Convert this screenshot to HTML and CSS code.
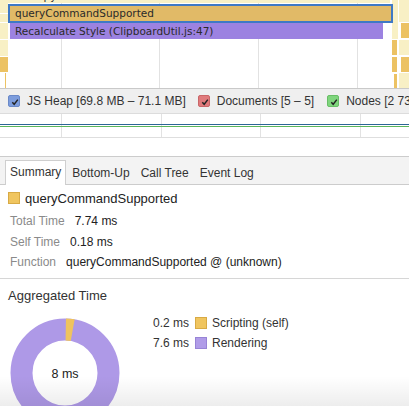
FILE: index.html
```html
<!DOCTYPE html>
<html>
<head>
<meta charset="utf-8">
<link rel="stylesheet" href="styles.css">
</head>
<body>
<div class="page">
  <div class="flame">
    <div class="grid" style="left:61px"></div>
    <div class="grid" style="left:159px"></div>
    <div class="grid" style="left:258px"></div>
    <div class="grid" style="left:357px"></div>

    <div class="blk pale" style="left:0;top:0;width:8px;height:13px"></div>
    <div class="blk pale" style="left:0;top:14px;width:8px;height:8px"></div>
    <div class="blk pale" style="left:0;top:23px;width:8px;height:16px"></div>
    <div class="blk pale" style="left:0;top:40px;width:8px;height:16px"></div>
    <div class="blk gold" style="left:0;top:57px;width:8px;height:15px"></div>
    <div class="blk gold" style="left:5px;top:73px;width:1px;height:15px"></div>

    <div class="bar pale top" style="left:8px;top:-11px;width:382px">tarCopyFont</div>

    <div class="blk pale" style="left:392px;top:0;width:6px;height:39px"></div>
    <div class="blk gold" style="left:392px;top:40px;width:5px;height:15px"></div>
    <div class="blk gold" style="left:392px;top:57px;width:5px;height:15px"></div>
    <div class="blk gold" style="left:394px;top:74px;width:3px;height:14px"></div>
    <div class="blk pale" style="left:399px;top:0;width:10px;height:22px"></div>
    <div class="blk gold" style="left:401px;top:23px;width:8px;height:15px"></div>
    <div class="blk pale" style="left:399px;top:40px;width:10px;height:15px"></div>
    <div class="blk gold" style="left:401px;top:57px;width:8px;height:15px"></div>
    <div class="blk pale" style="left:399px;top:73px;width:10px;height:15px"></div>

    <div class="bar sel" style="left:8px;top:4px;width:385px">queryCommandSupported</div>
    <div class="bar purple" style="left:10px;top:23px;width:373px">Recalculate Style (ClipboardUtil.js:47)</div>
  </div>

  <div class="counters">
    <span class="cb blue"><svg viewBox="0 0 12 12"><path d="M3.3 6.2 L5.2 8.3 L8.8 3.6" /></svg></span>
    <span class="clabel">JS Heap [69.8 MB – 71.1 MB]</span>
    <span class="cb red"><svg viewBox="0 0 12 12"><path d="M3.3 6.2 L5.2 8.3 L8.8 3.6" /></svg></span>
    <span class="clabel">Documents [5 – 5]</span>
    <span class="cb green"><svg viewBox="0 0 12 12"><path d="M3.3 6.2 L5.2 8.3 L8.8 3.6" /></svg></span>
    <span class="clabel">Nodes [2 73</span>
  </div>

  <div class="graph">
    <div class="grid" style="left:61px"></div>
    <div class="grid" style="left:161px"></div>
    <div class="grid" style="left:260px"></div>
    <div class="grid" style="left:360px"></div>
    <div class="line-blue"></div>
    <div class="line-green"></div>
  </div>

  <div class="blank"></div>

  <div class="tabs">
    <div class="tab active">Summary</div>
    <div class="tab">Bottom-Up</div>
    <div class="tab">Call Tree</div>
    <div class="tab">Event Log</div>
  </div>

  <div class="summary">
    <div class="title"><span class="swatch yellow"></span>queryCommandSupported</div>
    <div class="row"><span class="lbl">Total Time</span><span class="val">7.74 ms</span></div>
    <div class="row"><span class="lbl">Self Time</span><span class="val">0.18 ms</span></div>
    <div class="row"><span class="lbl">Function</span><span class="val">queryCommandSupported @ (unknown)</span></div>
  </div>

  <div class="agg">
    <div class="agg-title">Aggregated Time</div>
    <div class="agg-body">
      <svg class="donut" width="120" height="120" viewBox="0 0 120 120">
        <circle cx="57" cy="60" r="43.5" fill="none" stroke="#ae99e7" stroke-width="22"/>
        <circle cx="57" cy="60" r="43.5" fill="none" stroke="#efc35f" stroke-width="22"
          stroke-dasharray="7 300" transform="rotate(-89 57 60)"/>
        <text x="57" y="64.5" text-anchor="middle" class="donut-text">8 ms</text>
      </svg>
      <div class="legend">
        <div class="lrow"><span class="lval">0.2 ms</span><span class="swatch yellow"></span>Scripting (self)</div>
        <div class="lrow"><span class="lval">7.6 ms</span><span class="swatch purple-sw"></span>Rendering</div>
      </div>
    </div>
  </div>
  <div class="shade"></div>
</div>
</body>
</html>
```

FILE: styles.css
```css
html, body {
  margin: 0;
  padding: 0;
  background: #fff;
}
.page {
  position: relative;
  width: 409px;
  height: 406px;
  overflow: hidden;
  font-family: "Liberation Sans", Arial, sans-serif;
  color: #222;
}
.flame {
  position: relative;
  height: 88px;
  border-bottom: 1px solid #c9c9c9;
  overflow: hidden;
  background: #fff;
}
.grid {
  position: absolute;
  top: 0;
  bottom: 0;
  width: 1px;
  background: #e2e2e2;
}
.blk {
  position: absolute;
}
.pale { background: #f8f0c5; }
.gold { background: #ecc263; }
.bar {
  position: absolute;
  height: 16px;
  line-height: 16px;
  box-sizing: border-box;
  padding-left: 6px;
  font-family: "DejaVu Sans", Verdana, sans-serif;
  font-size: 10.5px;
  color: #2a2a2a;
  white-space: nowrap;
  overflow: hidden;
}
.bar.top {
  height: 14px;
  line-height: 14px;
  padding-left: 7px;
}
.bar.sel {
  height: 19px;
  line-height: 15px;
  background: #e1ba67;
  border: 2px solid #3f79c5;
  padding-left: 5px;
}
.bar.purple {
  height: 16px;
  background: #9c82e1;
  padding-left: 5px;
}
.counters {
  height: 24px;
  background: #efefef;
  border-bottom: 1px solid #dcdcdc;
  display: flex;
  align-items: center;
  padding-left: 8px;
  font-size: 12px;
  color: #333;
  white-space: nowrap;
  overflow: hidden;
}
.cb {
  width: 12px;
  height: 12px;
  border-radius: 2px;
  box-sizing: border-box;
  display: inline-block;
  flex: none;
  margin-right: 7px;
}
.cb svg {
  width: 12px;
  height: 12px;
  display: block;
}
.cb path {
  fill: none;
  stroke: #222;
  stroke-width: 1.4;
}
.cb.blue { background: #7d9ddd; border: 1px solid #6a89c8; }
.cb.red { background: #e07a7c; border: 1px solid #c96668; margin-left: 12px; }
.cb.green { background: #7fd57d; border: 1px solid #68be66; margin-left: 13px; }
.clabel { flex: none; }
.graph {
  position: relative;
  height: 23px;
  border-bottom: 1px solid #dedede;
}
.line-blue {
  position: absolute;
  left: 0;
  right: 0;
  top: 10px;
  height: 1px;
  background: #2d6696;
}
.line-green {
  position: absolute;
  left: 0;
  right: 0;
  top: 12px;
  height: 1px;
  background: #5bb65b;
}
.blank {
  height: 18px;
  border-bottom: 1px solid #cccccc;
}
.tabs {
  background: #f3f3f3;
  border-bottom: 1px solid #cccccc;
  display: flex;
  align-items: flex-end;
  padding-left: 5px;
  box-sizing: border-box;
  height: 28px;
  font-size: 12px;
  color: #333;
}
.tab {
  height: 24px;
  line-height: 23px;
  padding: 0 4px;
  margin-right: 1px;
  box-sizing: border-box;
  border: 1px solid transparent;
  border-bottom: none;
  margin-bottom: -1px;
}
.tab.active {
  background: #fff;
  border-color: #cfcfcf;
  height: 25px;
}
.summary {
  padding: 5px 8px 5px;
  border-bottom: 1px solid #d6d6d6;
}
.title {
  display: flex;
  align-items: center;
  height: 16px;
  font-size: 13px;
  color: #222;
  margin-bottom: 5px;
}
.swatch {
  display: inline-block;
  width: 12px;
  height: 12px;
  box-sizing: border-box;
  margin-right: 5px;
  flex: none;
}
.swatch.yellow { background: #f0c55f; border: 1px solid #d8aa45; }
.swatch.purple-sw { background: #b09ce8; border: 1px solid #9884d6; }
.row {
  height: 20.5px;
  line-height: 20.5px;
  font-size: 12px;
  padding-left: 2px;
  white-space: nowrap;
}
.lbl {
  color: #8a8a8a;
  margin-right: 10px;
}
.val {
  color: #222;
}
.agg {
  padding: 9px 8px 0;
}
.agg-title {
  font-size: 13px;
  line-height: 16px;
  color: #333;
}
.agg-body {
  display: flex;
  margin-top: 9px;
}
.donut {
  display: block;
  flex: none;
}
.donut-text {
  font-family: "Liberation Sans", Arial, sans-serif;
  font-size: 12.5px;
  fill: #222;
}
.legend {
  margin-left: 25px;
  font-size: 12px;
  color: #333;
}
.lrow {
  display: flex;
  align-items: center;
  height: 20px;
}
.lval {
  margin-right: 6px;
}
.shade {
  position: absolute;
  left: 0;
  right: 0;
  bottom: 0;
  height: 30px;
  background: linear-gradient(to bottom, rgba(0,0,0,0), rgba(0,0,0,0.07));
  pointer-events: none;
}
```
